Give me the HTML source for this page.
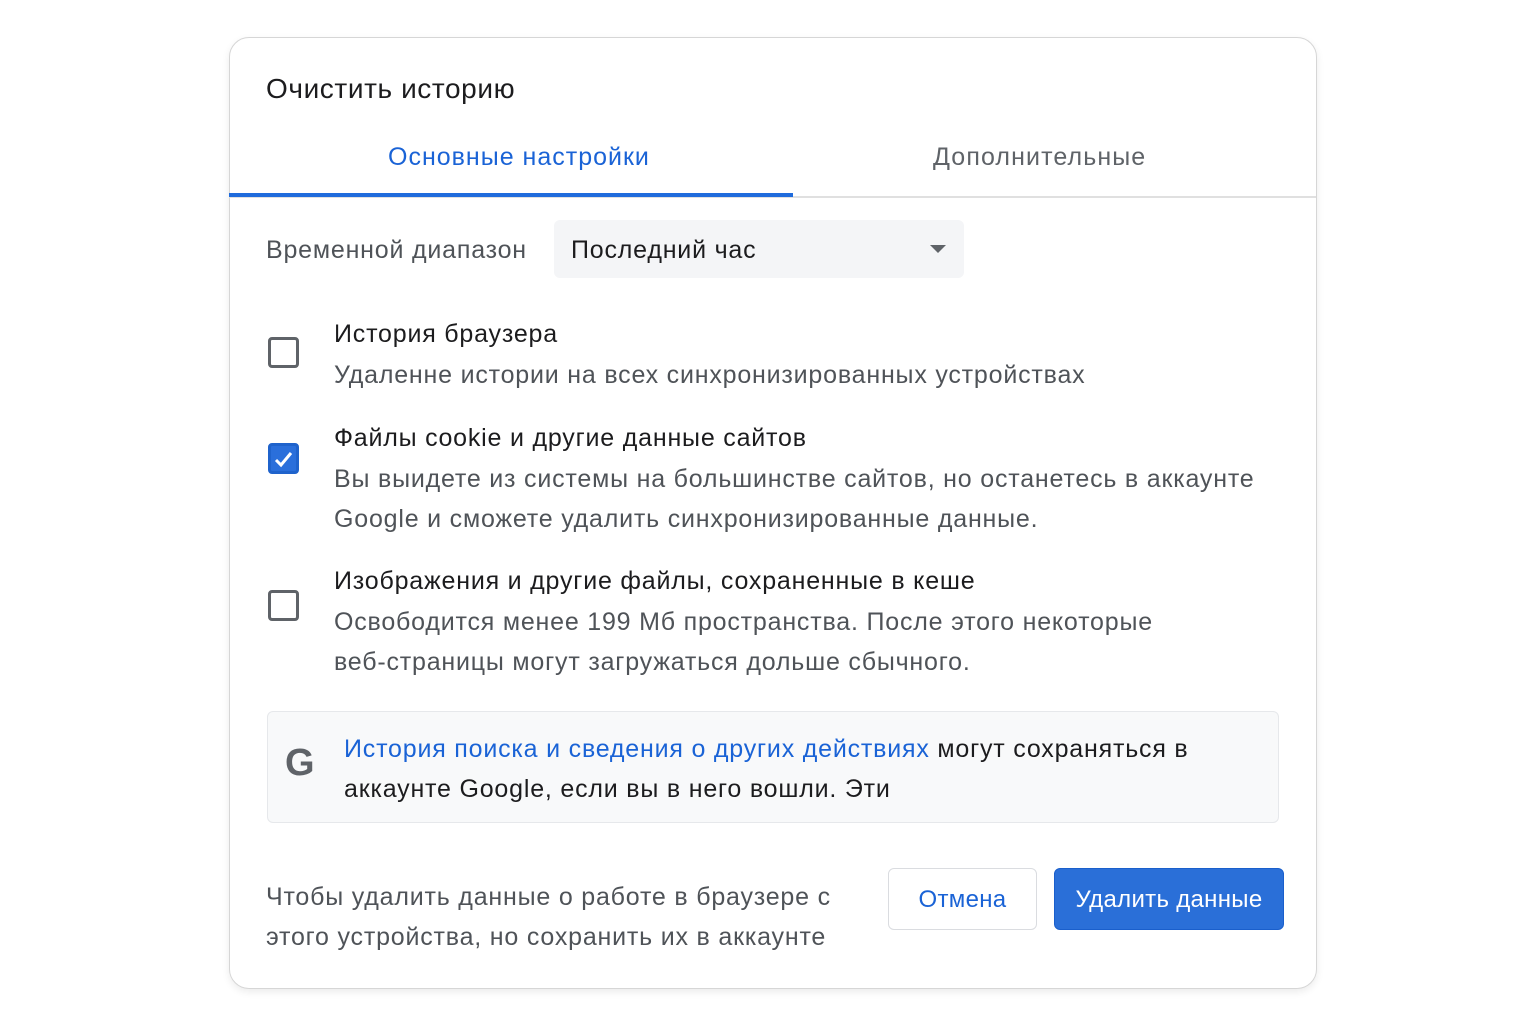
<!DOCTYPE html>
<html><head><meta charset="utf-8"><style>
body{margin:0;width:1536px;height:1024px;background:#fff;font-family:"Liberation Sans",sans-serif;position:relative;overflow:hidden}
.a{position:absolute;white-space:nowrap}
.dlg{position:absolute;left:229px;top:37px;width:1086px;height:950px;border:1px solid #d6d6d6;border-radius:20px;box-shadow:0 3px 8px rgba(0,0,0,.08);background:#fff}
.cb{position:absolute;left:268px;width:25px;height:25px;border:3px solid #5f6368;border-radius:4px}
.t{font-size:25px;letter-spacing:0.8px;color:#1c1c1e}
.s{font-size:25px;letter-spacing:0.8px;color:#4f5358}
</style></head><body>
<div class="dlg"></div>
<div class="a" style="left:266px;top:73px;font-size:28px;letter-spacing:0.6px;color:#1c1c1e">Очистить историю</div>
<div class="a" style="left:388px;top:143px;font-size:25px;letter-spacing:1px;color:#1a63d6">Основные настройки</div>
<div class="a" style="left:933px;top:143px;font-size:25px;letter-spacing:1.1px;color:#5f6368">Дополнительные</div>
<div class="a" style="left:229px;top:196px;width:1087px;height:2px;background:#e0e0e0"></div>
<div class="a" style="left:229px;top:193px;width:564px;height:4px;background:#1f6bdc"></div>
<div class="a s" style="left:266px;top:236px">Временной диапазон</div>
<div class="a" style="left:554px;top:220px;width:410px;height:58px;background:#f4f5f7;border-radius:6px"></div>
<div class="a t" style="left:571px;top:236px">Последний час</div>
<div class="a" style="left:930px;top:245px;width:0;height:0;border-left:8px solid transparent;border-right:8px solid transparent;border-top:8px solid #5f6368"></div>

<div class="cb" style="top:337px"></div>
<div class="a t" style="left:334px;top:320px">История браузера</div>
<div class="a s" style="left:334px;top:361px">Удаленне истории на всех синхронизированных устройствах</div>

<div class="cb" style="top:443px;background:#2a6fdb;border-color:#1f63cc"></div>
<svg class="a" style="left:270px;top:446px" width="27" height="27" viewBox="0 0 27 27"><path d="M6 14l5 5 10-12" fill="none" stroke="#fff" stroke-width="3"/></svg>
<div class="a t" style="left:334px;top:424px">Файлы cookie и другие данные сайтов</div>
<div class="a s" style="left:334px;top:459px;line-height:40px">Вы выидете из системы на большинстве сайтов, но останетесь в аккаунте<br>Google и сможете удалить синхронизированные данные.</div>

<div class="cb" style="top:590px"></div>
<div class="a t" style="left:334px;top:567px">Изображения и другие файлы, сохраненные в кеше</div>
<div class="a s" style="left:334px;top:602px;line-height:40px">Освободится менее 199 Мб пространства. После этого некоторые<br>веб-страницы могут загружаться дольше сбычного.</div>

<div class="a" style="left:267px;top:711px;width:1010px;height:110px;background:#f8f9fa;border:1px solid #e6e8eb;border-radius:6px"></div>
<div class="a" style="left:285px;top:742px;font-size:38px;font-weight:bold;color:#5f6368">G</div>
<div class="a t" style="left:344px;top:729px;line-height:40px"><span style="color:#1a63d6">История поиска и сведения о других действиях</span> могут сохраняться в<br>аккаунте Google, если вы в него вошли. Эти</div>

<div class="a s" style="left:266px;top:877px;line-height:40px">Чтобы удалить данные о работе в браузере с<br>этого устройства, но сохранить их в аккаунте</div>
<div class="a" style="left:888px;top:868px;width:147px;height:60px;border:1px solid #dadce0;border-radius:6px;font-size:24px;letter-spacing:0.3px;color:#1a63d6;text-align:center;line-height:62px">Отмена</div>
<div class="a" style="left:1054px;top:868px;width:228px;height:60px;border:1px solid #1a5fcc;background:#2a6fd8;border-radius:6px;font-size:24px;letter-spacing:0.3px;color:#fff;text-align:center;line-height:62px">Удалить данные</div>
</body></html>
